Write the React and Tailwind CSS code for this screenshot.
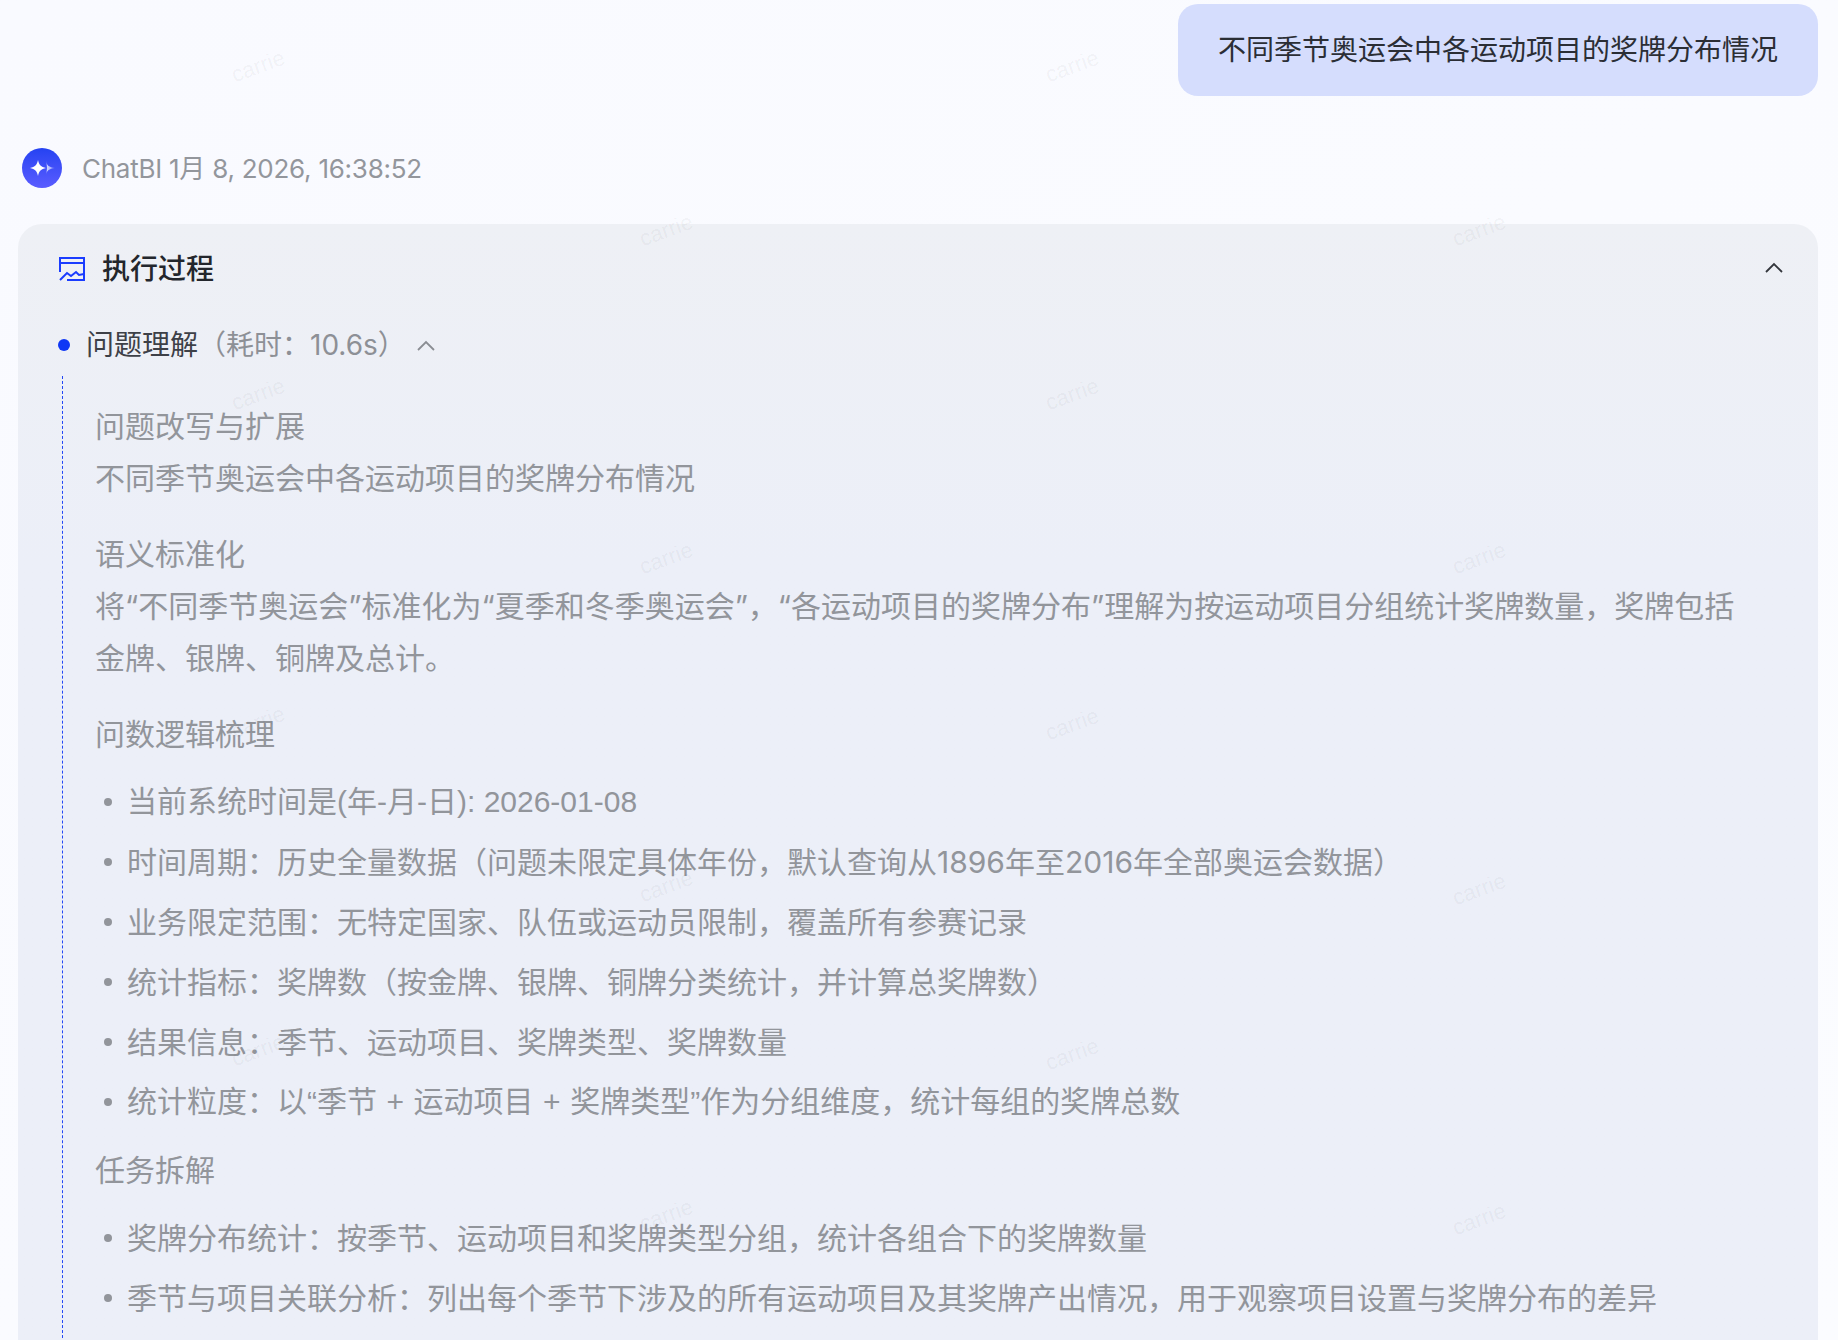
import React from 'react';

const FONT = { fontFamily: 'Inter, "Noto Sans CJK SC", sans-serif' };
// lines with hyphens, quotes and plus signs sit closer to Arial's widths
const ARIAL = "font-['Liberation_Sans','Noto_Sans_CJK_SC',sans-serif]";

const marks = [
  [258, 66], [1072, 66], [666, 230], [1479, 230],
  [258, 394], [1072, 394], [666, 558], [1479, 558],
  [258, 722], [1072, 724], [666, 886], [1479, 889],
  [258, 1050], [1072, 1054], [666, 1215], [1479, 1219],
];

const logicItems = [
  { text: '当前系统时间是(年-月-日): 2026-01-08', className: ARIAL },
  { text: '时间周期：历史全量数据（问题未限定具体年份，默认查询从1896年至2016年全部奥运会数据）' },
  { text: '业务限定范围：无特定国家、队伍或运动员限制，覆盖所有参赛记录' },
  { text: '统计指标：奖牌数（按金牌、银牌、铜牌分类统计，并计算总奖牌数）' },
  { text: '结果信息：季节、运动项目、奖牌类型、奖牌数量' },
  { text: '统计粒度：以“季节 + 运动项目 + 奖牌类型”作为分组维度，统计每组的奖牌总数', className: `${ARIAL} [word-spacing:1.2px]` },
];

const taskItems = [
  { text: '奖牌分布统计：按季节、运动项目和奖牌类型分组，统计各组合下的奖牌数量' },
  { text: '季节与项目关联分析：列出每个季节下涉及的所有运动项目及其奖牌产出情况，用于观察项目设置与奖牌分布的差异' },
];

const Chevron = ({ className }) => (
  <svg viewBox="0 0 18 11" fill="none" stroke="currentColor" strokeWidth="1.8" className={className}>
    <path d="M1 10 9 2l8 8" />
  </svg>
);

const Avatar = () => (
  <div className="h-10 w-10 rounded-full bg-gradient-to-b from-[#2442f2] to-[#5a5cff]">
    <svg viewBox="0 0 40 40" className="h-10 w-10">
      <defs>
        <linearGradient id="star-fade" x1="0" x2="1" y1="0" y2="0">
          <stop offset="0" stopColor="#ffffff" stopOpacity="0.8" />
          <stop offset="1" stopColor="#ffffff" stopOpacity="0.35" />
        </linearGradient>
      </defs>
      <path d="M24 13c.9 4.500 3 6.200 9 7-6 .8-8.100 2.500-9 7 1.300-4.500 1.300-9.500 0-14z" fill="url(#star-fade)" />
      <path d="M16 12c1.100 5 2.900 6.900 8 8-5.100 1.100-6.900 3-8 8-1.100-5-2.900-6.900-8-8 5.100-1.100 6.900-3 8-8z" fill="#ffffff" />
    </svg>
  </div>
);

const ProcessIcon = () => (
  <svg viewBox="0 0 26 24" fill="none" stroke="#1a3cff" strokeWidth="2" className="h-6 w-[26px]">
    <path d="M1 15V1h24v22H8" />
    <path d="M1 6h24" />
    <path d="M1 23l7-7 4 3 5-4 3 3 5-1" />
  </svg>
);

const BulletList = ({ items }) => (
  <ul>
    {items.map((item) => (
      <li key={item.text} className="flex h-[60px] items-center">
        <span className="ml-[9px] mr-[15px] h-2 w-2 shrink-0 rounded-full bg-[#92959b]" />
        <span className={item.className}>{item.text}</span>
      </li>
    ))}
  </ul>
);

export default function App() {
  return (
    <div
      style={FONT}
      className="relative h-[1340px] overflow-hidden bg-gradient-to-br from-[#f9faff] to-[#fbfcff]"
    >
      <div className="flex flex-col pt-1">
        <div className="mr-5 flex h-[92px] items-center self-end rounded-[20px] bg-[#d5ddfd] px-10 text-[28px] text-[#2b2e35]">
          不同季节奥运会中各运动项目的奖牌分布情况
        </div>

        <div className="ml-[22px] mt-[52px] flex items-center gap-5 text-[26px] tracking-[-0.25px] text-[#93969c]">
          <Avatar />
          <span>ChatBI 1月 8, 2026, 16:38:52</span>
        </div>

        <div className="ml-[18px] mr-5 mt-9 rounded-t-[24px] bg-gradient-to-b from-[#eef0f5] to-[#ecEff8] to-30% pl-10 pr-[58px] pt-[25px]">
          <div className="flex h-10 items-center justify-between">
            <div className="flex items-center gap-[17px] pl-px">
              <ProcessIcon />
              <span className="text-[28px] font-medium text-[#23262c]">执行过程</span>
            </div>
            <Chevron className="mr-[-23px] mt-[-4px] h-[11px] w-[18px] text-[#33363c]" />
          </div>

          <div className="mt-9 flex h-10 items-center text-[28px]">
            <span className="h-3 w-3 rounded-full bg-[#0f37f5]" />
            <span className="ml-4 text-[#3d4047]">问题理解</span>
            <span className="text-[#8d9096]">（耗时：10.6s）</span>
            <Chevron className="ml-[11px] h-[11px] w-[18px] text-[#8a8d93]" />
          </div>

          <div className="ml-1 mt-[11px] border-l border-dashed border-[#2347f5] pb-10 pl-8 pt-6 text-[30px] leading-[52px] text-[#92959b]">
            <p>问题改写与扩展</p>
            <p>不同季节奥运会中各运动项目的奖牌分布情况</p>

            <p className="mt-6">语义标准化</p>
            <p>将“不同季节奥运会”标准化为“夏季和冬季奥运会”，“各运动项目的奖牌分布”理解为按运动项目分组统计奖牌数量，奖牌包括金牌、银牌、铜牌及总计。</p>

            <p className="mb-3 mt-6">问数逻辑梳理</p>
            <BulletList items={logicItems} />

            <p className="mb-3 mt-3">任务拆解</p>
            <BulletList items={taskItems} />
          </div>
        </div>
      </div>

      {marks.map(([x, y]) => (
        <span
          key={`${x}-${y}`}
          style={{ left: x, top: y }}
          className={`pointer-events-none absolute -translate-x-1/2 -translate-y-1/2 -rotate-[20deg] text-[22px] text-black/[0.05] ${ARIAL}`}
        >
          carrie
        </span>
      ))}
    </div>
  );
}
